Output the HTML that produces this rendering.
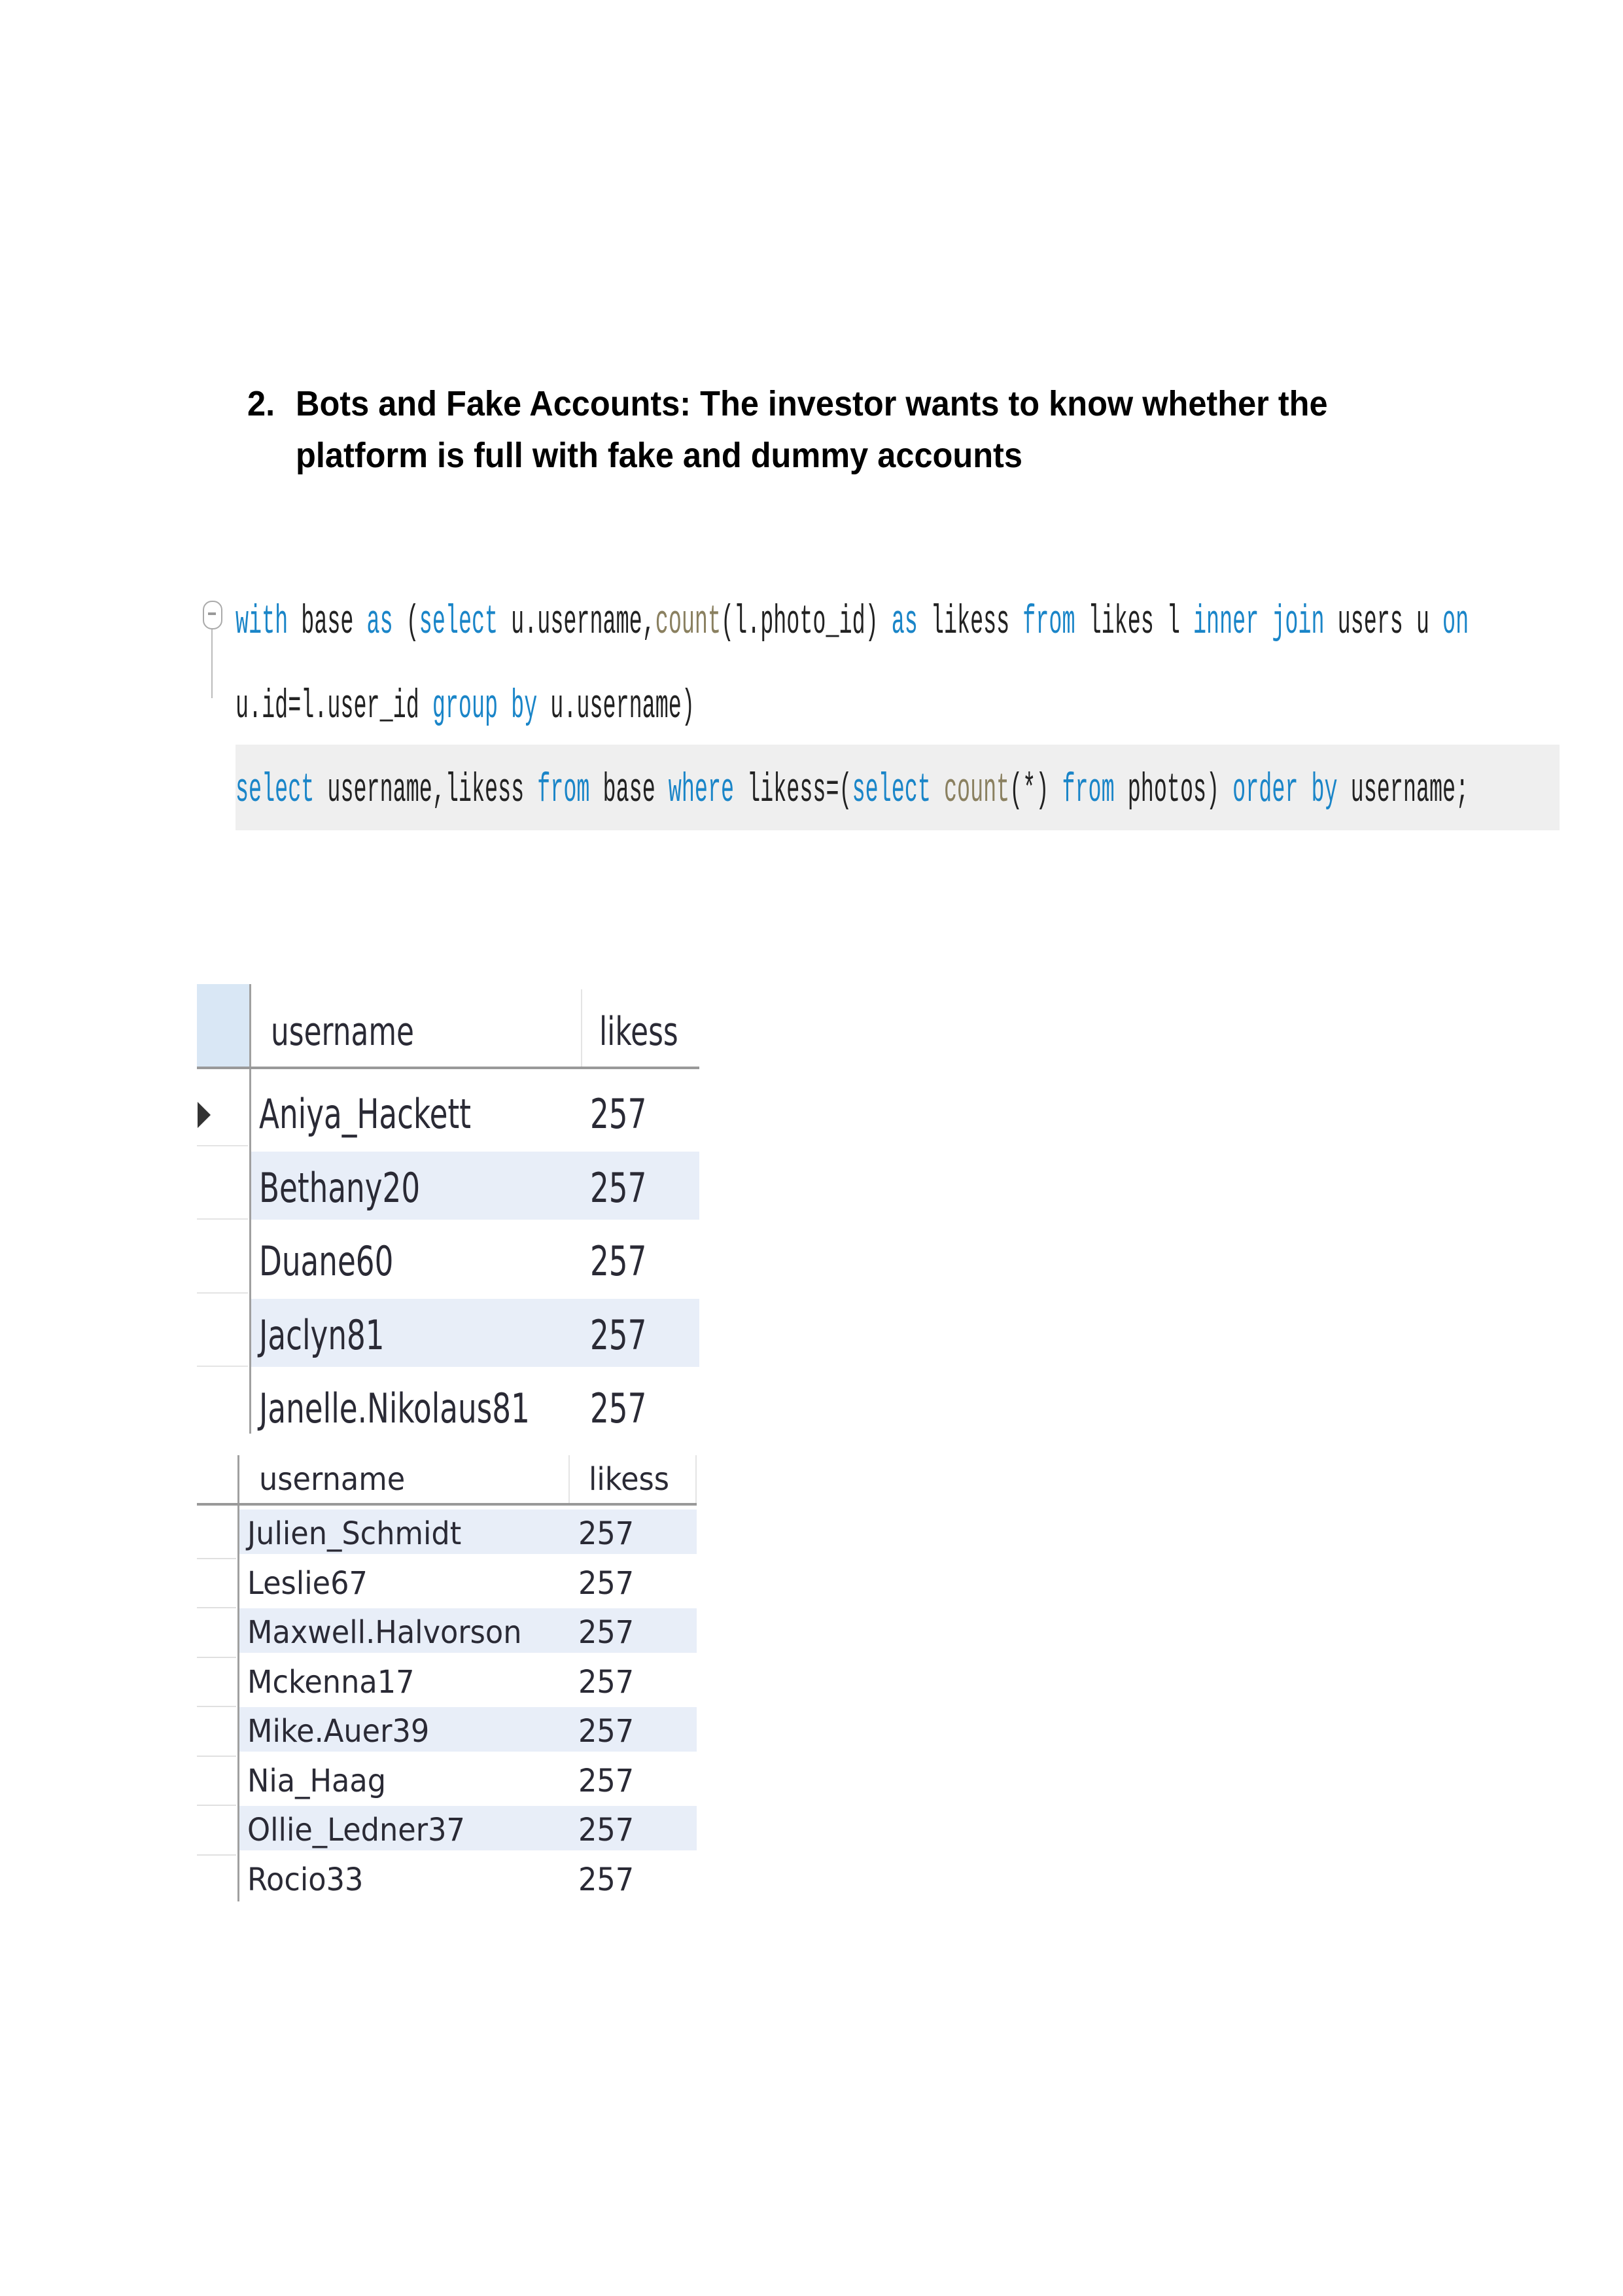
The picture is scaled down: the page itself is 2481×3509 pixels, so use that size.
<!DOCTYPE html>
<html><head><meta charset="utf-8"><style>
body{margin:0;width:2481px;height:3509px;background:#fff;position:relative;overflow:hidden}
.a{position:absolute;white-space:nowrap;transform-origin:0 50%;line-height:1}
.h{font-family:"Liberation Sans",sans-serif;font-weight:bold;font-size:54px;color:#000;transform:scaleX(0.935)}
.c{font-family:"Liberation Mono",monospace;font-size:62px;color:#222;transform:scaleX(0.539)}
.k{color:#1a85c8}.f{color:#8a8060}
.t1{font-family:"DejaVu Sans",sans-serif;font-size:62px;color:#2a2a35;transform:scaleX(0.73)}
.t2{font-family:"DejaVu Sans",sans-serif;font-size:48px;color:#2a2a35;transform:scaleX(0.93)}
.r{position:absolute}
</style></head><body>
<div class="a h" style="left:378px;top:590px">2.</div>
<div class="a h" style="left:452px;top:590px">Bots and Fake Accounts: The investor wants to know whether the</div>
<div class="a h" style="left:452px;top:669px">platform is full with fake and dummy accounts</div>

<div class="r" style="left:310px;top:918px;width:26px;height:40px;border:2px solid #aaa;border-radius:14px;background:#fff"></div>
<div class="r" style="left:318px;top:936px;width:12px;height:4px;background:#999"></div>
<div class="r" style="left:323px;top:962px;width:2px;height:105px;background:#bbb"></div>
<div class="r" style="left:360px;top:1138px;width:2024px;height:131px;background:#efefef"></div>

<div class="a c" style="left:360px;top:920px"><span class="k">with</span> base <span class="k">as</span> (<span class="k">select</span> u.username,<span class="f">count</span>(l.photo_id) <span class="k">as</span> likess <span class="k">from</span> likes l <span class="k">inner join</span> users u <span class="k">on</span></div>
<div class="a c" style="left:360px;top:1049px">u.id=l.user_id <span class="k">group by</span> u.username)</div>
<div class="a c" style="left:360px;top:1177px"><span class="k">select</span> username,likess <span class="k">from</span> base <span class="k">where</span> likess=(<span class="k">select</span> <span class="f">count</span>(*) <span class="k">from</span> photos) <span class="k">order by</span> username;</div>

<!-- table 1 -->
<div style="position:absolute;left:0;top:-6px;width:2481px;height:1px">
<div class="r" style="left:301px;top:1510px;width:80px;height:126px;background:#d9e7f5"></div>
<div class="r" style="left:381px;top:1510px;width:3px;height:687px;background:#a0a0a0"></div>
<div class="r" style="left:888px;top:1518px;width:2px;height:118px;background:#e4e4e4"></div>
<div class="r" style="left:301px;top:1636px;width:768px;height:4px;background:#999"></div>
<div class="r" style="left:384px;top:1766px;width:685px;height:104px;background:#e8eef8"></div>
<div class="r" style="left:384px;top:1991px;width:685px;height:104px;background:#e8eef8"></div>
<div class="r" style="left:301px;top:1756px;width:78px;height:2px;background:#e4e4e4"></div>
<div class="r" style="left:301px;top:1868px;width:78px;height:2px;background:#e4e4e4"></div>
<div class="r" style="left:301px;top:1981px;width:78px;height:2px;background:#e4e4e4"></div>
<div class="r" style="left:301px;top:2093px;width:78px;height:2px;background:#e4e4e4"></div>
<div class="r" style="left:302px;top:1690px;width:0;height:0;border-top:20px solid transparent;border-bottom:20px solid transparent;border-left:20px solid #333"></div>
<div class="a t1" style="left:414px;top:1553px;font-size:60px">username</div>
<div class="a t1" style="left:916px;top:1553px;font-size:60px">likess</div>
<div class="a t1" style="left:396px;top:1678px">Aniya_Hackett</div>
<div class="a t1" style="left:396px;top:1791px">Bethany20</div>
<div class="a t1" style="left:396px;top:1903px">Duane60</div>
<div class="a t1" style="left:396px;top:2016px">Jaclyn81</div>
<div class="a t1" style="left:396px;top:2128px">Janelle.Nikolaus81</div>
<div class="a t1" style="left:902px;top:1678px">257</div>
<div class="a t1" style="left:902px;top:1791px">257</div>
<div class="a t1" style="left:902px;top:1903px">257</div>
<div class="a t1" style="left:902px;top:2016px">257</div>
<div class="a t1" style="left:902px;top:2128px">257</div>
</div>

<!-- table 2 -->
<div style="position:absolute;left:0;top:-11px;width:2481px;height:1px">
<div class="r" style="left:363px;top:2235px;width:3px;height:682px;background:#a0a0a0"></div>
<div class="r" style="left:869px;top:2235px;width:2px;height:75px;background:#e4e4e4"></div>
<div class="r" style="left:1063px;top:2235px;width:2px;height:75px;background:#e4e4e4"></div>
<div class="r" style="left:301px;top:2308px;width:764px;height:4px;background:#999"></div>
<div class="r" style="left:366px;top:2318px;width:699px;height:68px;background:#e8eef8"></div>
<div class="r" style="left:366px;top:2469px;width:699px;height:68px;background:#e8eef8"></div>
<div class="r" style="left:366px;top:2620px;width:699px;height:68px;background:#e8eef8"></div>
<div class="r" style="left:366px;top:2771px;width:699px;height:68px;background:#e8eef8"></div>
<div class="r" style="left:301px;top:2392px;width:60px;height:2px;background:#e0e0e0"></div>
<div class="r" style="left:301px;top:2467px;width:60px;height:2px;background:#e0e0e0"></div>
<div class="r" style="left:301px;top:2543px;width:60px;height:2px;background:#e0e0e0"></div>
<div class="r" style="left:301px;top:2618px;width:60px;height:2px;background:#e0e0e0"></div>
<div class="r" style="left:301px;top:2694px;width:60px;height:2px;background:#e0e0e0"></div>
<div class="r" style="left:301px;top:2769px;width:60px;height:2px;background:#e0e0e0"></div>
<div class="r" style="left:301px;top:2845px;width:60px;height:2px;background:#e0e0e0"></div>
<div class="a t2" style="left:396px;top:2248px">username</div>
<div class="a t2" style="left:900px;top:2248px">likess</div>
<div class="a t2" style="left:378px;top:2331px">Julien_Schmidt</div>
<div class="a t2" style="left:378px;top:2407px">Leslie67</div>
<div class="a t2" style="left:378px;top:2482px">Maxwell.Halvorson</div>
<div class="a t2" style="left:378px;top:2558px">Mckenna17</div>
<div class="a t2" style="left:378px;top:2633px">Mike.Auer39</div>
<div class="a t2" style="left:378px;top:2709px">Nia_Haag</div>
<div class="a t2" style="left:378px;top:2784px">Ollie_Ledner37</div>
<div class="a t2" style="left:378px;top:2860px">Rocio33</div>
<div class="a t2" style="left:884px;top:2331px">257</div>
<div class="a t2" style="left:884px;top:2407px">257</div>
<div class="a t2" style="left:884px;top:2482px">257</div>
<div class="a t2" style="left:884px;top:2558px">257</div>
<div class="a t2" style="left:884px;top:2633px">257</div>
<div class="a t2" style="left:884px;top:2709px">257</div>
<div class="a t2" style="left:884px;top:2784px">257</div>
<div class="a t2" style="left:884px;top:2860px">257</div>
</div>
</body></html>
